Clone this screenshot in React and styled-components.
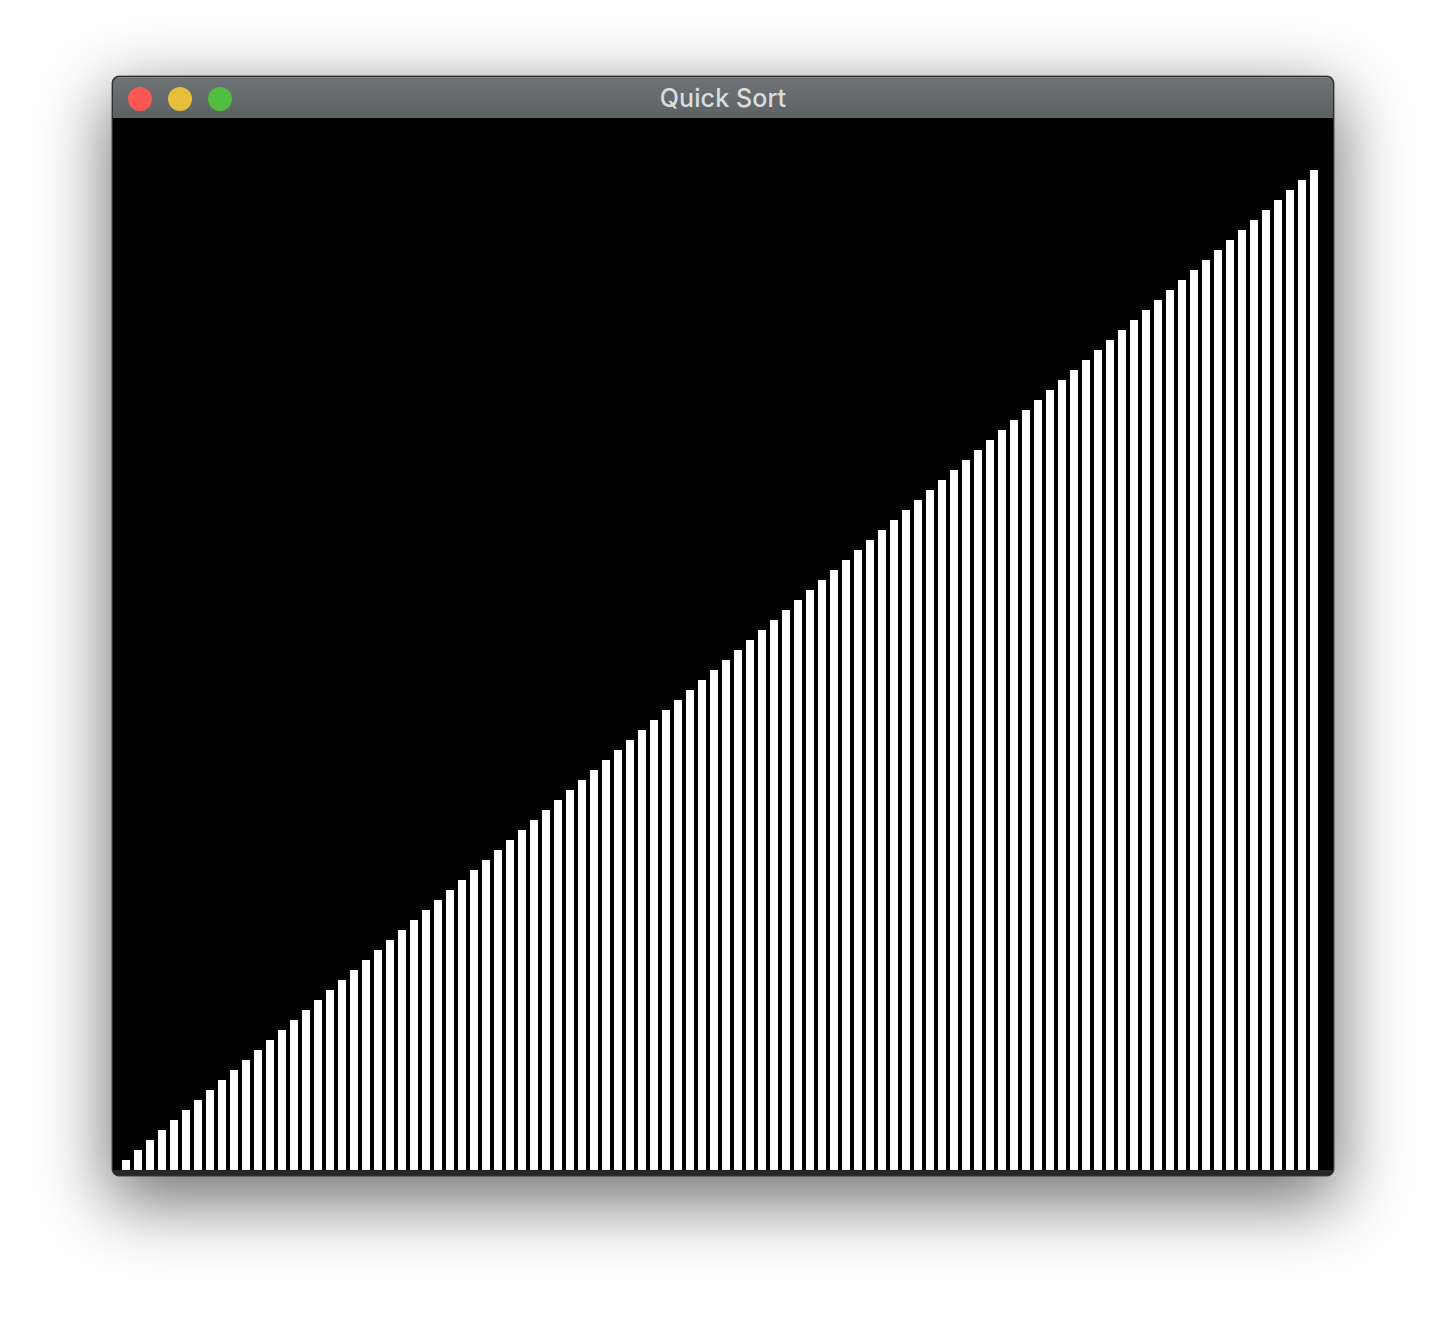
import React from 'react';
import styled, { createGlobalStyle } from 'styled-components';

const GlobalStyle = createGlobalStyle`
  html, body {
    margin: 0;
    padding: 0;
    background: #ffffff;
  }
`;

const Page = styled.div`
  display: flex;
  justify-content: center;
  padding-top: 76px;
  height: 1324px;
  box-sizing: border-box;
`;

const Window = styled.div`
  width: 1222px;
  height: 1100px;
  box-sizing: border-box;
  border-radius: 7px;
  overflow: hidden;
  background: #000;
  border: 1px solid #2e2e2e;
  box-shadow: 0 22px 70px 4px rgba(0, 0, 0, 0.56), 0 0 0 0.5px rgba(0, 0, 0, 0.6);
  display: flex;
  flex-direction: column;
`;

const TitleBar = styled.div`
  height: 41px;
  flex: none;
  position: relative;
  display: flex;
  align-items: center;
  justify-content: center;
  background: linear-gradient(#6e7476, #5c6264);
  box-shadow: inset 0 1px 0 rgba(255, 255, 255, 0.12);
`;

const Lights = styled.div`
  position: absolute;
  left: 15px;
  top: 10px;
  display: flex;
  gap: 16px;
`;

const Light = styled.span`
  width: 24px;
  height: 24px;
  border-radius: 50%;
  background: ${(p) => p.$color};
`;

const Title = styled.div`
  font-family: Inter, 'Open Sans', sans-serif;
  font-size: 25px;
  font-weight: 500;
  color: #d9dcdd;
  letter-spacing: 0.1px;
  margin-top: 1px;
`;

const Canvas = styled.div`
  height: 1052px;
  flex: none;
  display: flex;
  align-items: flex-end;
  gap: 4px;
  padding-left: 9px;
  background: #000;
`;

const Bar = styled.div.attrs((p) => ({ style: { height: p.$h } }))`
  width: 8px;
  flex: none;
  background: #fff;
`;

const Footer = styled.div`
  flex: 1;
  background: #262626;
`;

const bars = Array.from({ length: 100 }, (_, i) => (i + 1) * 10);

export default function App() {
  return (
    <>
      <GlobalStyle />
      <Page>
        <Window>
          <TitleBar>
            <Lights>
              <Light $color="#fc5753" />
              <Light $color="#e6bf3c" />
              <Light $color="#53bd3f" />
            </Lights>
            <Title>Quick Sort</Title>
          </TitleBar>
          <Canvas>
            {bars.map((h, i) => (
              <Bar key={i} $h={h} />
            ))}
          </Canvas>
          <Footer />
        </Window>
      </Page>
    </>
  );
}
